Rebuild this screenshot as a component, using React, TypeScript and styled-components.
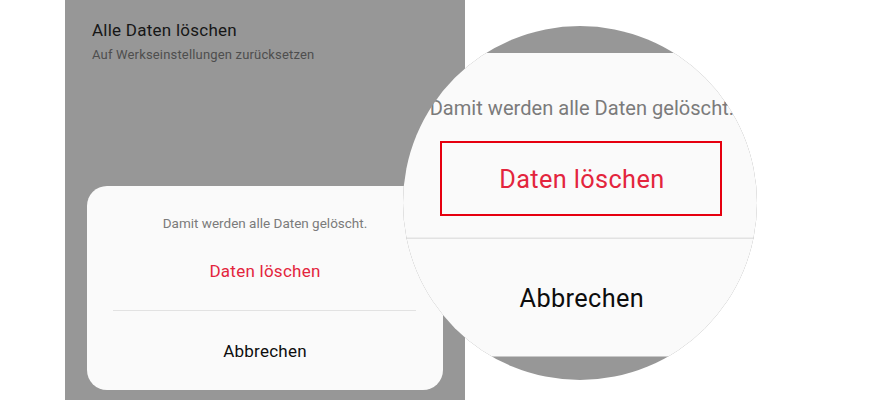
import React from 'react'
import styled, { createGlobalStyle } from 'styled-components'

const GlobalStyle = createGlobalStyle`
    html, body {
        margin: 0;
        padding: 0;
        background: #ffffff;
        font-family: Roboto, "Noto Sans", "Liberation Sans", sans-serif;
    }
`

const LENS_SCALE = 1.488

export default function App() {
    return (
        <StyledPage>
            <GlobalStyle />
            <Phone>
                <SettingItem>
                    <SettingTitle>Alle Daten löschen</SettingTitle>
                    <SettingHint>Auf Werkseinstellungen zurücksetzen</SettingHint>
                </SettingItem>
                <ConfirmSheet />
            </Phone>

            <Lens>
                <Magnified>
                    <ConfirmSheet />
                </Magnified>
                <Highlight />
            </Lens>
        </StyledPage>
    )
}

function ConfirmSheet() {
    return (
        <Sheet>
            <Message>Damit werden alle Daten gelöscht.</Message>
            <SheetButton danger>Daten löschen</SheetButton>
            <Divider />
            <SheetButton>Abbrechen</SheetButton>
        </Sheet>
    )
}

const StyledPage = styled.div`
    position: relative;
    width: 879px;
    height: 400px;
    overflow: hidden;
    background: #ffffff;
`

const Phone = styled.div`
    box-sizing: border-box;
    margin-left: 65px;
    width: 400px;
    height: 400px;
    padding: 21px 22px 10px;
    background: #979797;
    display: flex;
    flex-direction: column;
`

const SettingItem = styled.div`
    padding-left: 5px;
    display: flex;
    flex-direction: column;
    gap: 7px;
`

const SettingTitle = styled.div`
    font-size: 17px;
    line-height: 19px;
    letter-spacing: 0.25px;
    color: #161616;
`

const SettingHint = styled.div`
    font-size: 13px;
    line-height: 16px;
    letter-spacing: 0.17px;
    color: #4e4e4e;
`

const Sheet = styled.div`
    box-sizing: border-box;
    margin-top: auto;
    width: 356px;
    height: 204px;
    border-radius: 20px;
    background: #fafafa;
    padding-top: 29px;
    display: flex;
    flex-direction: column;
    align-items: center;
`

const Message = styled.div`
    font-size: 13.5px;
    line-height: 16px;
    color: #7b7b7b;
`

const SheetButton = styled.div<{ danger?: boolean }>`
    margin-top: 30px;
    font-size: 17px;
    line-height: 20px;
    letter-spacing: 0.25px;
    color: ${p => (p.danger ? '#e3253d' : '#0d0d0d')};
`

const Divider = styled.div`
    margin-top: 29px;
    align-self: stretch;
    margin-left: 26px;
    margin-right: 27px;
    height: 1px;
    background: #e2e2e2;
`

const Lens = styled.div`
    position: absolute;
    left: 403px;
    top: 26px;
    width: 354px;
    height: 354px;
    border-radius: 50%;
    overflow: hidden;
    background: #979797;
    padding-top: 27px;
    box-sizing: border-box;
`

const Magnified = styled.div`
    width: 356px;
    margin-left: -86px;
    transform: scale(${LENS_SCALE});
    transform-origin: 0 0;
`

const Highlight = styled.div`
    position: absolute;
    left: 37px;
    top: 115px;
    width: 282px;
    height: 75px;
    box-sizing: border-box;
    border: 2px solid #e6000f;
`
